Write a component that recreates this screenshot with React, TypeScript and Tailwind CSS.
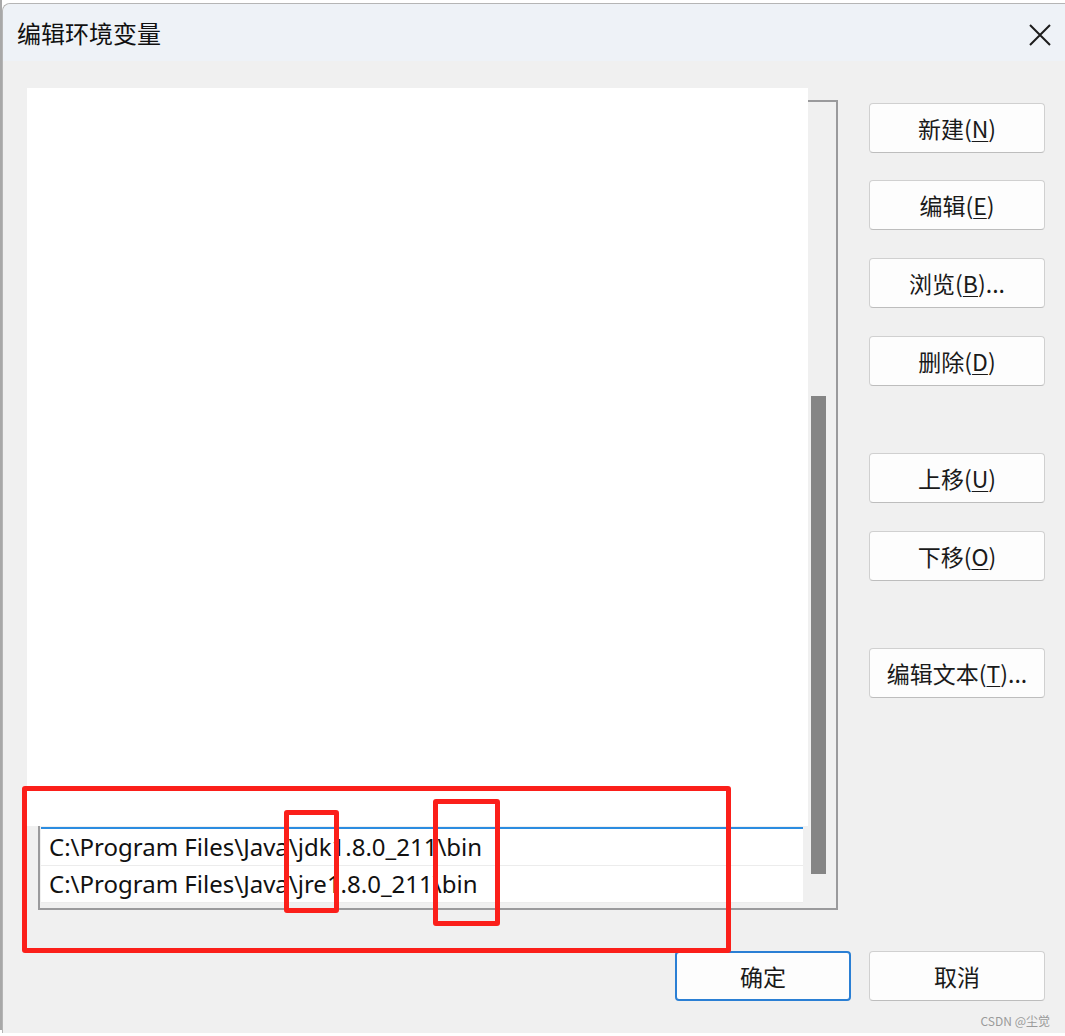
const cjk = "font-['Microsoft_YaHei','Noto_Sans_CJK_SC',sans-serif]";

function WinButton({ label, hot, rest, primary }: { label: string; hot: string; rest: string; primary?: boolean }) {
  return (
    <button
      className={`w-[176px] h-[50px] rounded-[4px] bg-[#fdfdfd] text-[23px] text-[#1a1a1a] flex items-center justify-center ${cjk} ${
        primary ? "border-2 border-[#2a7fd4]" : "border border-[#d0d0d0] border-b-[#bdbdbd]"
      }`}
    >
      {label}
      {hot && (
        <>
          (<span className="underline underline-offset-[3px] decoration-1">{hot}</span>)
        </>
      )}
      {rest}
    </button>
  );
}

const paths = [
  "C:\\Program Files\\Java\\jdk1.8.0_211\\bin",
  "C:\\Program Files\\Java\\jre1.8.0_211\\bin",
];

export default function App() {
  return (
    <div className="relative w-[1065px] h-[1036px] bg-white overflow-hidden flex">
      <div className="w-[3px] h-[1030px] bg-[#a8a8a8]" />
      <div className="relative flex-1 h-[1030px] mt-[3px] rounded-tl-[8px] border-t border-l border-[#b5b5b5] bg-[#f0f0f0] flex flex-col">
        <div className="h-[57px] rounded-tl-[8px] bg-[#eef2f7] flex items-center justify-between pl-[14px] pr-[12px]">
          <span className={`text-[24px] text-[#111] ${cjk}`}>编辑环境变量</span>
          <svg width="22" height="22" viewBox="0 0 22 22" className="mr-[2px] mt-[4px]">
            <path d="M1 1 L21 21 M21 1 L1 21" stroke="#1c1c1c" strokeWidth="2" fill="none" />
          </svg>
        </div>

        <div className="relative flex-1 flex flex-col pt-[39px] pr-[20px]">
          <div className="flex">
            {/* list box */}
            <div className="ml-[35px] w-[800px] h-[810px] border-2 border-[#9a9a9c] bg-[#f0f0f0] flex">
              <div className="flex-1 flex flex-col justify-end pb-[5px] pl-[1px]">
                <div className="bg-white border-t-2 border-[#2b8ce0]">
                  {paths.map((p) => (
                    <div
                      key={p}
                      className="h-[37px] pl-[8px] flex items-center border-b border-[#ececec] text-[24px] text-[#111] font-['Segoe_UI','Noto_Sans',sans-serif]"
                    >
                      {p}
                    </div>
                  ))}
                </div>
              </div>
              <div className="w-[33px] pt-[294px] pl-[8px]">
                <div className="w-[15px] h-[478px] bg-[#858585]" />
              </div>
            </div>

            <div className="ml-[31px] mt-[3px] flex flex-col">
              <WinButton label="新建" hot="N" rest="" />
              <div className="h-[27px]" />
              <WinButton label="编辑" hot="E" rest="" />
              <div className="h-[28px]" />
              <WinButton label="浏览" hot="B" rest="..." />
              <div className="h-[28px]" />
              <WinButton label="删除" hot="D" rest="" />
              <div className="h-[67px]" />
              <WinButton label="上移" hot="U" rest="" />
              <div className="h-[28px]" />
              <WinButton label="下移" hot="O" rest="" />
              <div className="h-[67px]" />
              <WinButton label="编辑文本" hot="T" rest="..." />
            </div>
          </div>

          <div className="mt-[41px] flex justify-end gap-[18px]">
            <WinButton label="确定" hot="" rest="" primary />
            <WinButton label="取消" hot="" rest="" />
          </div>

          {/* white pasted patch covering top of list */}
          <div className="absolute left-[24px] top-[27px] w-[781px] h-[738px] bg-white" />
        </div>
      </div>

      {/* red annotations */}
      <div className="absolute left-[22px] top-[786px] w-[709px] h-[167px] border-[5px] border-[#fb1f1a] rounded-[3px]" />
      <div className="absolute left-[284px] top-[810px] w-[55px] h-[103px] border-[5px] border-[#fb1f1a] rounded-[3px]" />
      <div className="absolute left-[433px] top-[799px] w-[67px] h-[127px] border-[5px] border-[#fb1f1a] rounded-[3px]" />

      <div className={`absolute right-[15px] top-[1012px] text-[12px] text-[#9a9a9a] ${cjk}`}>CSDN @尘觉</div>
    </div>
  );
}
